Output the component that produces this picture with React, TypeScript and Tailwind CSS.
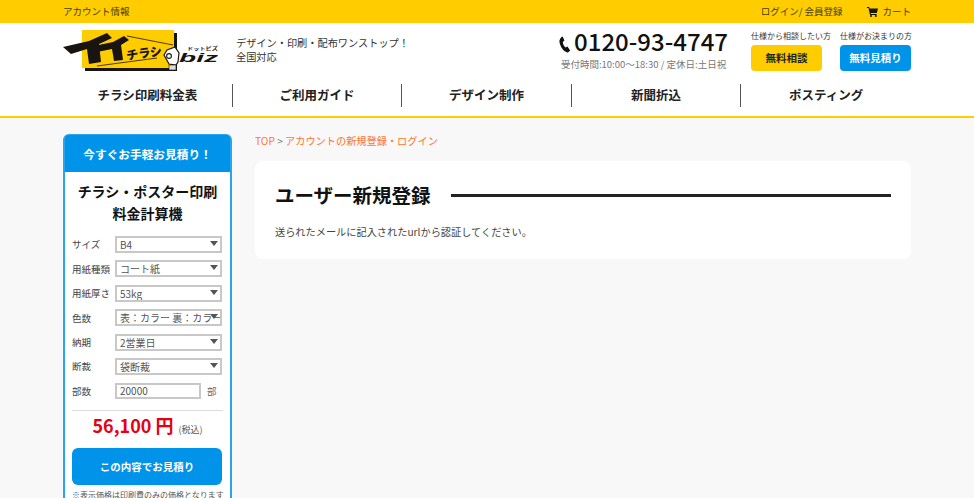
const jp = "font-['Noto_Sans_CJK_JP','Noto_Sans',sans-serif]";

function Logo() {
  return (
    <svg width="156" height="44" viewBox="0 0 156 44" className="shrink-0">
      <rect x="22" y="4" width="92" height="38" fill="#1a1411" />
      <rect x="19" y="1" width="92" height="38" fill="#ffcc00" />
      <path d="M0 18 L26 12 L44 4 L49 9 L36 15 L38 33 L26 35 L24 20 L8 25 Z" fill="#1a1411" />
      <path d="M31 17 L50 13 L61 7 L66 11 L58 16 L60 31 L51 32 L49 20 L34 23 Z" fill="#1a1411" />
      <path d="M64 7 L110 16 M34 37 L94 29" stroke="#1a1411" strokeWidth="0.8" fill="none" />
      <text x="64" y="31" fontSize="12" fontWeight="900" fill="#1a1411" transform="rotate(-8 64 31)" className={jp}>チラシ</text>
      <path d="M101 26 L104 21 L112 18 L116 24 L115 33 L113 36 L106 35 Z" fill="#fff" stroke="#1a1411" strokeWidth="1.2" />
      <circle cx="106" cy="27" r="2.4" fill="none" stroke="#1a1411" strokeWidth="1.1" />
      <rect x="106" y="36" width="7" height="5" fill="#ddd" stroke="#1a1411" strokeWidth="0.6" />
      <text x="116" y="33" fontSize="13" fontWeight="700" fill="#1a1411" fontStyle="italic" textLength="39" lengthAdjust="spacingAndGlyphs" className="font-['Liberation_Sans',sans-serif]">biz</text>
      <text x="124" y="21" fontSize="4.5" fontWeight="700" fill="#1a1411" textLength="31" lengthAdjust="spacingAndGlyphs" className={jp}>ドットビズ</text>
    </svg>
  );
}

function Cart() {
  return (
    <svg width="11" height="10" viewBox="0 0 11 10" fill="#1a1400">
      <path d="M0 0 H2.2 L2.6 1.4 H11 L9.8 6 H3.6 L3.9 7 H9.6 V8 H3 L1.5 1 H0 Z" />
      <circle cx="4" cy="9" r="1" />
      <circle cx="8.8" cy="9" r="1" />
    </svg>
  );
}

function Phone() {
  return (
    <svg width="12" height="17" viewBox="0 0 12 17" fill="#111" className="mt-[11px]">
      <path d="M3.6 0.4 L5.4 4.6 L3.8 6 C3.8 8 5.2 10.6 6.6 11.6 L8.4 10.6 L11.2 14.4 L9 16.4 C5.4 17 1 11 0.4 5.6 C0.2 3.6 1.6 1.2 3.6 0.4 Z" />
    </svg>
  );
}

const navItems = ["チラシ印刷料金表", "ご利用ガイド", "デザイン制作", "新聞折込", "ポスティング"];

const fields = [
  { label: "サイズ", value: "B4" },
  { label: "用紙種類", value: "コート紙" },
  { label: "用紙厚さ", value: "53kg" },
  { label: "色数", value: "表：カラー 裏：カラー" },
  { label: "納期", value: "2営業日" },
  { label: "断裁", value: "袋断裁" },
];

function SelectRow({ label, value }: { label: string; value: string }) {
  return (
    <div className="flex items-center h-[17px] mb-[7.4px]">
      <span className="w-[43px] shrink-0 text-[9.5px] text-[#444] whitespace-nowrap">{label}</span>
      <div className="relative w-[107px] h-[17px] border-2 border-[#c8c8c8] bg-white flex items-center pl-[3px] overflow-hidden">
        <span className="text-[10px] text-[#555] whitespace-nowrap">{value}</span>
        <span className="absolute right-[2px] top-[3px] w-0 h-0 border-x-[4px] border-x-transparent border-t-[5px] border-t-[#555]" />
      </div>
    </div>
  );
}

export default function App() {
  return (
    <div className={`${jp} w-[974px] h-[498px] overflow-hidden bg-[#f8f8f8]`}>
      <div className="h-[23px] bg-[#ffcc00]">
        <div className="w-[848px] mx-auto h-full flex items-center justify-between text-[9.5px] text-[#4a3c00]">
          <span>アカウント情報</span>
          <div className="flex items-center">
            <span className="mr-[25px]">ログイン/ 会員登録</span>
            <Cart />
            <span className="ml-[4px]">カート</span>
          </div>
        </div>
      </div>

      <header className="h-[95px] bg-white border-b-2 border-[#ffcc00]">
        <div className="w-[848px] mx-auto h-[61px] flex">
          <div className="pt-[6px]">
            <Logo />
          </div>
          <p className="ml-[17px] mt-[13px] text-[10.2px] leading-[14px] text-[#333] whitespace-nowrap">
            デザイン・印刷・配布ワンストップ！<br />全国対応
          </p>
          <div className="ml-auto flex flex-col items-center mr-[23px] pt-[2px]">
            <div className="flex items-start gap-[3px] h-[32px]">
              <Phone />
              <span className="text-[24px] leading-[32px] font-medium text-[#111] whitespace-nowrap">0120-93-4747</span>
            </div>
            <span className="text-[9.5px] leading-[13px] mt-[1px] text-[#777] whitespace-nowrap">受付時間:10:00〜18:30 / 定休日:土日祝</span>
          </div>
          <div className="flex gap-[10px] pt-[7px]">
            <div className="w-[79px] flex flex-col items-start">
              <span className="text-[8px] leading-[11px] text-[#333] whitespace-nowrap">仕様から相談したい方</span>
              <div className="mt-[4px] w-[71px] h-[26px] rounded-[4px] bg-[#ffcc00] flex items-center justify-center text-[10.5px] font-bold text-[#222]">無料相談</div>
            </div>
            <div className="w-[71px] flex flex-col items-start">
              <span className="text-[8px] leading-[11px] text-[#333] whitespace-nowrap">仕様がお決まりの方</span>
              <div className="mt-[4px] w-[71px] h-[26px] rounded-[4px] bg-[#0093ea] flex items-center justify-center text-[10.5px] font-bold text-white">無料見積り</div>
            </div>
          </div>
        </div>
        <nav className="w-[848px] mx-auto h-[23px] flex">
          {navItems.map((item, i) => (
            <div
              key={item}
              className={`w-[169.6px] h-[23px] flex items-center justify-center text-[12.5px] font-bold text-[#222] ${i < 4 ? "border-r border-[#555]" : ""}`}
            >
              {item}
            </div>
          ))}
        </nav>
      </header>

      <div className="w-[848px] mx-auto flex items-start pt-[16px]">
        <aside className="w-[169px] shrink-0 rounded-t-[6px] border-2 border-[#2ba4ee] bg-white">
          <div className="h-[37px] -mt-[1px] bg-[#0093ea] rounded-t-[4px] flex items-center justify-center text-[11.7px] font-bold text-white">
            今すぐお手軽お見積り！
          </div>
          <div className="px-[7px]">
            <h2 className="mt-[8px] mb-[12px] text-center text-[14px] leading-[22px] font-bold text-[#111]">
              チラシ・ポスター印刷<br />料金計算機
            </h2>
            {fields.map((f) => (
              <SelectRow key={f.label} label={f.label} value={f.value} />
            ))}
            <div className="flex items-center h-[17px] mt-[1px]">
              <span className="w-[43px] shrink-0 text-[9.5px] text-[#444]">部数</span>
              <div className="w-[86px] h-[16px] border-2 border-[#c8c8c8] bg-white flex items-center pl-[3px] text-[10px] text-[#555]">20000</div>
              <span className="ml-[6px] text-[9.5px] text-[#666]">部</span>
            </div>
            <div className="mt-[11px] border-t border-[#ddd] flex items-baseline justify-center h-[28px] pt-[1px]">
              <span className="text-[18px] leading-[26px] font-bold text-[#e60012] whitespace-nowrap">56,100 円</span>
              <span className="ml-[5px] text-[9px] text-[#555] whitespace-nowrap">(税込)</span>
            </div>
            <div className="mt-[10px] w-[150px] h-[37px] rounded-[6px] bg-[#0093ea] flex items-center justify-center text-[10.5px] font-bold text-white">
              この内容でお見積り
            </div>
            <p className="mt-[4px] text-[8px] leading-[12px] text-[#555] whitespace-nowrap">※表示価格は印刷費のみの価格となります</p>
          </div>
        </aside>

        <main className="ml-[23px] flex-1">
          <p className="h-[14px] text-[10.2px] leading-[14px] text-[#777]">
            <span className="text-[#ff7433]">TOP</span> &gt; <span className="text-[#ff7433]">アカウントの新規登録・ログイン</span>
          </p>
          <section className="mt-[13px] h-[98px] rounded-[8px] bg-white px-[20px] pt-[20px]">
            <div className="flex items-center gap-[20px]">
              <h1 className="text-[19.5px] leading-[28px] font-bold text-[#111] whitespace-nowrap">ユーザー新規登録</h1>
              <div className="flex-1 h-[3px] bg-[#222]" />
            </div>
            <p className="mt-[15px] text-[10.2px] leading-[15px] text-[#444]">送られたメールに記入されたurlから認証してください。</p>
          </section>
        </main>
      </div>
    </div>
  );
}
